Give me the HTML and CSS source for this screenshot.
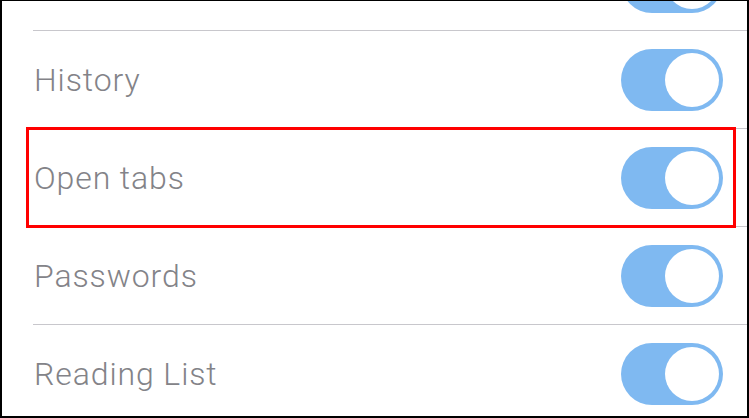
FILE: index.html
```html
<!DOCTYPE html>
<html lang="en">
<head>
<meta charset="utf-8">
<title>Sync settings</title>
<link rel="stylesheet" href="styles.css">
</head>
<body>
<div class="frame">
  <ul class="list">
    <li class="row"><div class="row-inner"><span class="label"></span><span class="toggle on"><span class="knob"></span></span></div></li>
    <li class="row"><div class="row-inner"><span class="label">History</span><span class="toggle on"><span class="knob"></span></span></div></li>
    <li class="row"><div class="row-inner"><span class="label">Open tabs</span><span class="toggle on"><span class="knob"></span></span></div></li>
    <li class="row"><div class="row-inner"><span class="label">Passwords</span><span class="toggle on"><span class="knob"></span></span></div></li>
    <li class="row"><div class="row-inner"><span class="label">Reading List</span><span class="toggle on"><span class="knob"></span></span></div></li>
  </ul>
  <div class="highlight"></div>
</div>
</body>
</html>
```

FILE: styles.css
```css
* { box-sizing: border-box; }
html, body { margin: 0; padding: 0; background: #ffffff; }
.frame {
  position: relative;
  width: 749px;
  height: 418px;
  overflow: hidden;
  border-style: solid;
  border-color: #000000;
  border-width: 1px 2px 2px 2px;
  background: #ffffff;
}
.list {
  list-style: none;
  margin: -68px 0 0 0;
  padding: 0;
}
.row {
  padding-left: 31px;
}
.row-inner {
  display: flex;
  align-items: center;
  justify-content: space-between;
  height: 98px;
  padding-right: 24px;
  border-bottom: 1px solid #c8c7cc;
}
.label {
  font-family: "Roboto", "Liberation Sans", sans-serif;
  font-size: 32px;
  font-weight: 300;
  letter-spacing: 0.9px;
  color: #838388;
  padding-left: 1px;
}
.toggle {
  display: flex;
  align-items: center;
  justify-content: flex-end;
  width: 102px;
  height: 62px;
  border-radius: 31px;
  background: #7fb9f1;
  padding: 4px;
}
.knob {
  width: 54px;
  height: 54px;
  border-radius: 50%;
  background: #ffffff;
}
.highlight {
  position: absolute;
  left: 24px;
  top: 126px;
  width: 710px;
  height: 101px;
  border: 3px solid #ff0000;
}
```
